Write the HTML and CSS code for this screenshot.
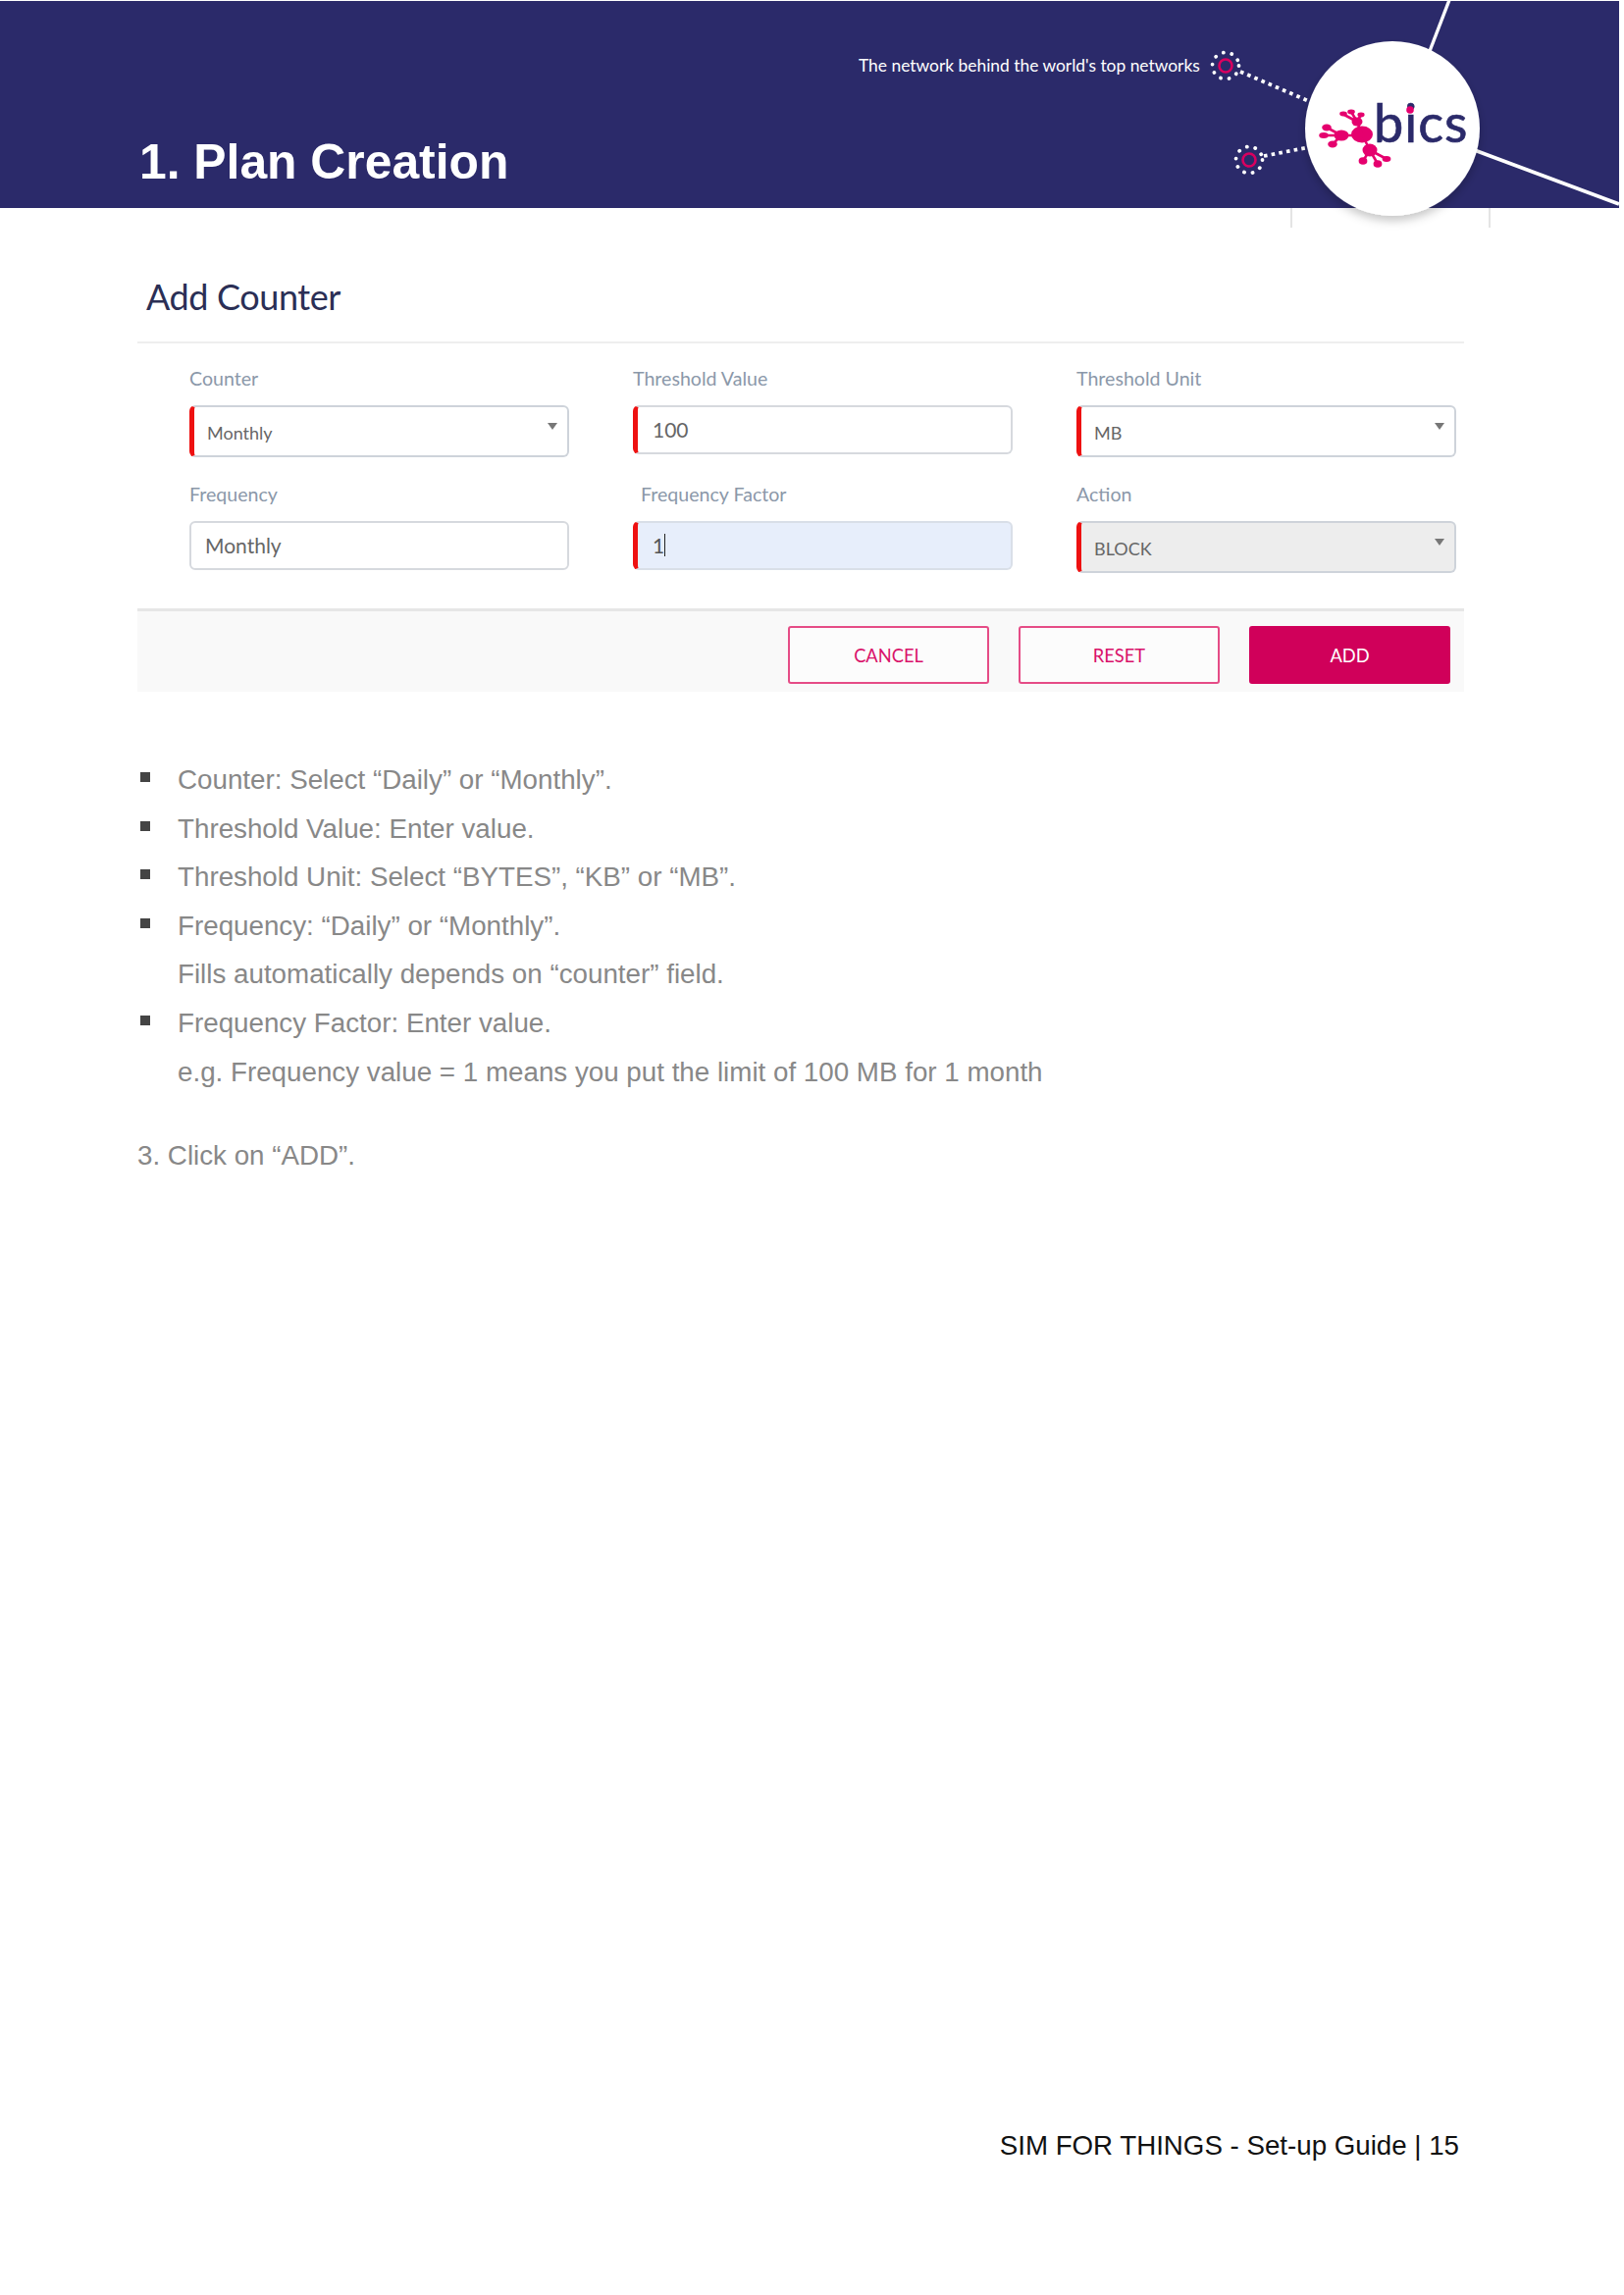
FILE: index.html
```html
<!DOCTYPE html>
<html lang="en">
<head>
    <meta charset="UTF-8">
    <title>SIM FOR THINGS - Set-up Guide</title>
    <link rel="stylesheet" href="styles.css">
</head>
<body>
    <div class="page">
        <header class="banner">
            <p class="tagline">The network behind the world's top networks</p>
            <h1>1. Plan Creation</h1>

            <!-- Logo and network graphic on top of the banner -->
            <svg class="banner-art" width="1655" height="240" viewBox="0 0 1655 240">
                <defs>
                    <filter id="soft" x="-20%" y="-20%" width="140%" height="140%">
                        <feDropShadow dx="0" dy="5" stdDeviation="5" flood-color="#000" flood-opacity="0.22"/>
                    </filter>
                </defs>
                <path d="M1316 212V232M1518 212V232" stroke="#c9c9c9" stroke-width="1"/>
                <path d="M1477 0L1457 52" stroke="#fff" stroke-width="3.4" fill="none"/>
                <path d="M1500 152L1650 208" stroke="#fff" stroke-width="3.8" fill="none"/>
                <path d="M1264 73L1336 104M1288 159L1334 150" stroke="#fff" stroke-width="3.8" stroke-dasharray="3.6 4.2" fill="none"/>

                <g fill="none" stroke="#fff" stroke-width="3.8" stroke-linecap="round" stroke-dasharray="0.1 8.6">
                    <circle cx="1249" cy="67" r="13.5"/>
                    <circle cx="1273" cy="163" r="13.5"/>
                </g>
                <g fill="none" stroke="#d9005f" stroke-width="2.6">
                    <ellipse cx="1249" cy="67" rx="6.5" ry="6.5"/>
                    <ellipse cx="1273" cy="163" rx="6.5" ry="6.5"/>
                </g>

                <circle cx="1419" cy="131" r="89" fill="#fff" filter="url(#soft)"/>

                <g fill="#e5006e">
                    <ellipse cx="1388" cy="137" rx="11" ry="8.5"/>
                    <ellipse cx="1367" cy="138" rx="7.5" ry="5.5"/>
                    <ellipse cx="1352" cy="130" rx="4.8" ry="3.4"/>
                    <ellipse cx="1349" cy="138" rx="4.8" ry="3"/>
                    <ellipse cx="1358" cy="147" rx="4.8" ry="3.4"/>
                    <ellipse cx="1383" cy="124" rx="5.5" ry="4.5"/>
                    <ellipse cx="1369" cy="116" rx="3.8" ry="2.4"/>
                    <ellipse cx="1377" cy="114" rx="3.8" ry="2.4"/>
                    <ellipse cx="1387" cy="117" rx="3.6" ry="2.4"/>
                    <ellipse cx="1396" cy="153" rx="7.5" ry="6.5"/>
                    <ellipse cx="1389" cy="164" rx="4.4" ry="3.8"/>
                    <ellipse cx="1404" cy="167" rx="4.4" ry="3.8"/>
                    <ellipse cx="1413" cy="162" rx="4.4" ry="3"/>
                </g>
                <path d="M1354 131L1367 138M1350 138H1367M1358 147L1367 138M1367 138H1388M1370 117L1383 124M1377 114L1383 124M1387 117L1383 124M1383 124L1388 137M1388 137L1396 153M1396 153L1389 164M1396 153L1404 167M1396 153L1413 162" stroke="#e5006e" stroke-width="2.6" fill="none"/>

                <text class="logo-word" x="1400" y="145">bics</text>
                <circle cx="1437" cy="112" r="3.8" fill="#e5006e"/>
            </svg>
        </header>

        <section class="panel">
            <h2>Add Counter</h2>

            <div class="field-grid">
                <div class="field">
                    <div class="field-label">Counter</div>
                    <div class="control select required">Monthly</div>
                </div>
                <div class="field">
                    <div class="field-label">Threshold Value</div>
                    <div class="control input required">100</div>
                </div>
                <div class="field">
                    <div class="field-label">Threshold Unit</div>
                    <div class="control select required">MB</div>
                </div>
                <div class="field">
                    <div class="field-label">Frequency</div>
                    <div class="control input plain">Monthly</div>
                </div>
                <div class="field">
                    <div class="field-label indented">Frequency Factor</div>
                    <div class="control input required focused">1<span class="caret"></span></div>
                </div>
                <div class="field">
                    <div class="field-label">Action</div>
                    <div class="control select required disabled">BLOCK</div>
                </div>
            </div>

            <div class="panel-footer">
                <button class="btn">CANCEL</button>
                <button class="btn">RESET</button>
                <button class="btn btn-primary">ADD</button>
            </div>
        </section>

        <ul class="notes">
            <li>Counter: Select “Daily” or “Monthly”.</li>
            <li>Threshold Value: Enter value.</li>
            <li>Threshold Unit: Select “BYTES”, “KB” or “MB”.</li>
            <li>Frequency: “Daily” or “Monthly”.</li>
            <li class="cont">Fills automatically depends on “counter” field.</li>
            <li>Frequency Factor: Enter value.</li>
            <li class="cont">e.g. Frequency value = 1 means you put the limit of 100 MB for 1 month</li>
        </ul>

        <p class="step">3. Click on “ADD”.</p>

        <footer class="page-footer">SIM FOR THINGS - Set-up Guide | 15</footer>
    </div>
</body>
</html>
```

FILE: styles.css
```css
body {
    margin: 0;
    background-color: #fff;
    font-family: "Liberation Sans", Arial, sans-serif;
}

.page {
    display: flex;
    flex-direction: column;
    height: 2339px;
    padding-top: 1px;
    box-sizing: border-box;
    overflow: hidden;
}

/* Banner */
.banner {
    position: relative;
    display: flex;
    flex-direction: column;
    box-sizing: border-box;
    width: 1650px;
    height: 211px;
    padding: 54px 0 17px 142px;
    background-color: #2b2a6a;
}

.tagline {
    margin: 0 0 0 733px;
    color: #fff;
    font-family: Lato, sans-serif;
    font-size: 17.4px;
    line-height: 24px;
}

.banner h1 {
    margin: auto 0 0;
    color: #fff;
    font-size: 49.8px;
    font-weight: bold;
    line-height: 60px;
}

.banner-art {
    position: absolute;
    top: -1px;
    left: 0;
}

.logo-word {
    fill: #2b2a6a;
    stroke: #2b2a6a;
    stroke-width: 0.7px;
    font-family: Lato, sans-serif;
    font-size: 54px;
    letter-spacing: 1px;
}

/* Form panel */
.panel {
    width: 1352px;
    margin: 67px 0 0 140px;
}

.panel h2 {
    margin: 0;
    padding: 0 0 23px 9px;
    border-bottom: 2px solid #eeeeee;
    color: #2b2f55;
    font-family: Lato, sans-serif;
    font-size: 36px;
    font-weight: normal;
    letter-spacing: -0.4px;
    line-height: 46px;
}

.field-grid {
    display: grid;
    grid-template-columns: repeat(3, 387px);
    column-gap: 65px;
    row-gap: 26px;
    padding: 24px 0 36px 53px;
}

.field-label {
    margin-bottom: 15px;
    color: #8b98a9;
    font-family: Lato, sans-serif;
    font-size: 19.6px;
    line-height: 24px;
}

.field-label.indented {
    padding-left: 8px;
}

.control {
    position: relative;
    display: flex;
    align-items: center;
    box-sizing: border-box;
    border: 2px solid #d6d9de;
    border-radius: 6px;
    background-color: #fff;
    color: #666;
    font-family: Lato, sans-serif;
}

.control.required {
    border-left: 5px solid #ee1111;
}

.control.input {
    height: 50px;
    margin-top: 1px;
    padding: 0 0 2px 15px;
    font-size: 21px;
}

.control.input.plain {
    margin-top: 0;
    padding-left: 14px;
}

.control.select {
    height: 53px;
    padding: 2px 0 0 13px;
    border-color: #ced3da;
    border-left-color: #ee1111;
    font-size: 18px;
}

.control.select::after {
    content: "";
    position: absolute;
    top: 16px;
    right: 10px;
    border-top: 7px solid #777;
    border-left: 5px solid transparent;
    border-right: 5px solid transparent;
}

.control.focused {
    background-color: #e7eefb;
    border-top-color: #d9dfe8;
    border-right-color: #d9dfe8;
    border-bottom-color: #d9dfe8;
    color: #555;
}

.control.disabled {
    background-color: #ededed;
}

.caret {
    width: 1px;
    height: 23px;
    background-color: #222;
}

/* Buttons */
.panel-footer {
    display: flex;
    justify-content: flex-end;
    gap: 30px;
    padding: 15px 14px 8px 0;
    border-top: 3px solid #e6e6e6;
    background-color: #f9f9f9;
}

.btn {
    width: 205px;
    height: 59px;
    border: 2px solid #e54c86;
    border-radius: 3px;
    background-color: #fcfcfc;
    color: #d9126a;
    font-family: Lato, sans-serif;
    font-size: 18.3px;
}

.btn-primary {
    border-color: #d0005a;
    background-color: #d0005a;
    color: #fff;
}

/* Instructions */
.notes {
    margin: 65px 0 0;
    padding: 0 0 0 181px;
    list-style: none;
    color: #888;
    font-size: 27.75px;
    line-height: 49.6px;
}

.notes li {
    position: relative;
}

.notes li::before {
    content: "";
    position: absolute;
    top: 17px;
    left: -38px;
    width: 10px;
    height: 10px;
    background-color: #444;
}

.notes li.cont::before {
    display: none;
}

.step {
    margin: 36px 0 0 140px;
    color: #888;
    font-size: 27.75px;
    line-height: 49.6px;
}

.page-footer {
    margin-top: auto;
    padding: 0 168px 134px 0;
    color: #111;
    font-size: 27.7px;
    line-height: 36px;
    text-align: right;
}
```
